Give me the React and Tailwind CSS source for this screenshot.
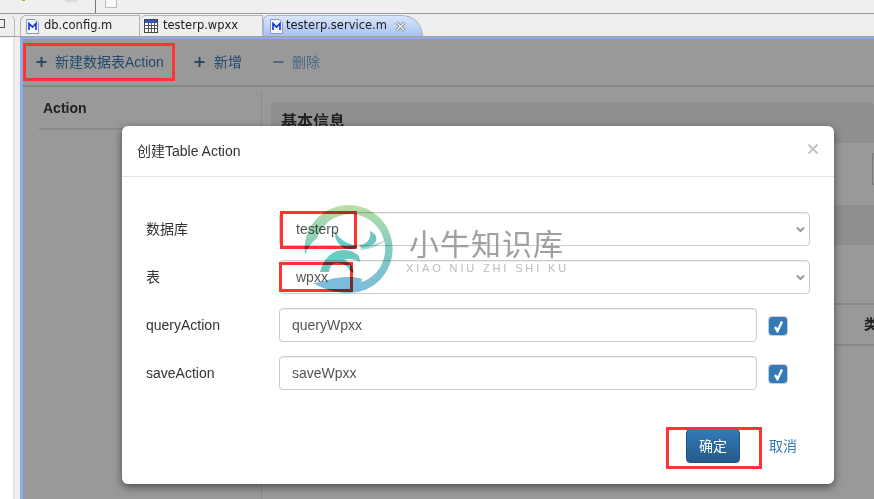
function MIcon() {
  return (
    <svg width="13" height="15" viewBox="0 0 13 15" className="shrink-0">
      <path d="M0.5 0.5H9L12.5 4V14.5H0.5Z" fill="#f4f6fb" stroke="#8a9ab5" />
      <path d="M3 11V4.5L6.5 8L10 4.5V11" fill="none" stroke="#1030e0" strokeWidth="1.6" />
    </svg>
  );
}
function GridIcon() {
  return (
    <svg width="14" height="14" viewBox="0 0 14 14" className="shrink-0">
      <rect x="0.5" y="0.5" width="13" height="13" fill="#fff" stroke="#444" />
      <rect x="1" y="1" width="12" height="3" fill="#3a4fc0" />
      <path d="M0 6.5H14M0 9.5H14M4.5 4V14M7.5 4V14M10.5 4V14" stroke="#555" />
    </svg>
  );
}
function Plus({ dim }) {
  return (
    <svg width="11" height="12" viewBox="0 0 11 12" className="shrink-0">
      {!dim && <path d="M5.5 1V11" stroke="#254a6b" strokeWidth="2" />}
      <path d="M0.5 6H10.5" stroke={dim ? "#4a6a86" : "#254a6b"} strokeWidth="2" />
    </svg>
  );
}
function Check() {
  return (
    <div className="w-[20px] h-[20px] rounded-[4px] bg-[#337ab7] border border-[#c3d0dc] flex items-center justify-center ml-[11px] mt-[8px] shrink-0">
      <svg width="13" height="13" viewBox="0 0 13 13">
        <path d="M3 7L5.5 11L10 1.5" fill="none" stroke="#fff" strokeWidth="2.4" />
      </svg>
    </div>
  );
}
function Select({ value }) {
  return (
    <div className="relative w-[531px] h-[34px]">
      <select defaultValue={value} className={`${field} w-full appearance-none pl-[16px]`}>
        <option>{value}</option>
      </select>
      <svg className="absolute left-[517px] top-[14px] pointer-events-none" width="9" height="7" viewBox="0 0 9 7">
        <path d="M1 1.5L4.5 5L8 1.5" fill="none" stroke="#999" strokeWidth="2" />
      </svg>
    </div>
  );
}
const rowLabel = "w-[133px] text-[14px] text-[#333] leading-[34px]";
const field = "h-[34px] border border-[#ccc] rounded-[4px] bg-white text-[14px] text-[#555] px-3 shadow-[inset_0_1px_1px_rgba(0,0,0,0.075)]";
const font = "font-['Liberation_Sans','Noto_Sans_CJK_SC',sans-serif]";

export default function App() {
  return (
    <div className={`relative w-[874px] h-[499px] overflow-hidden bg-[#efefef] flex flex-col ${font}`}>
      {/* top toolbar strip */}
      <div className="h-[14px] border-b border-[#9a9a92] bg-[#efefef] flex items-start shrink-0">
        <div className="ml-[22px] w-[3px] h-[1px] bg-[#c99a3a]" />
        <div className="ml-[40px] w-[12px] h-[2px] bg-[#dcdcdc]" />
        <div className="ml-[18px] w-px h-[13px] bg-[#777]" />
        <div className="ml-[9px] w-[12px] h-[8px] border border-[#bbb] border-t-0 bg-[#f8f8f8]" />
      </div>
      <div className="flex-1 flex min-h-0">
        {/* left view */}
        <div className="w-[20px] shrink-0 flex flex-col">
          <div className="h-[22px] flex items-start shrink-0">
            <div className="w-[15px] h-full border-r border-[#bbb] rounded-tr-[6px] mt-[1px] pt-[4px]">
              <div className="w-[5px] h-[9px] border border-l-0 border-[#555]" />
            </div>
          </div>
          <div className="h-px bg-[#a0a0a0] shrink-0" />
          <div className="h-px shrink-0" />
          <div className="flex-1 flex">
            <div className="w-[13px] bg-white" />
            <div className="w-[2px] bg-[#e8e5d8]" />
          </div>
        </div>
        {/* editor */}
        <div className="flex-1 flex flex-col min-w-0">
          <div className="h-[22px] flex items-stretch shrink-0 text-[11.5px] text-[#1a1a1a] font-['DejaVu_Sans',sans-serif]">
            <div className="w-[120px] border-l border-r border-t border-[#b5b5b5] rounded-tl-[6px] flex items-center gap-[5px] pl-[5px] mt-[1px]">
              <MIcon /><span>db.config.m</span>
            </div>
            <div className="w-[123px] border-r border-t border-[#b5b5b5] rounded-tl-[6px] flex items-center gap-[5px] pl-[4px] mt-[1px]">
              <GridIcon /><span>testerp.wpxx</span>
            </div>
            <div className="w-[160px] rounded-tl-[6px] rounded-tr-[24px] border-t border-r border-l border-[#a8b4cc] bg-gradient-to-b from-[#dbe6fb] to-[#a9c1f2] flex items-center gap-[3px] pl-[6px] mt-[1px]">
              <MIcon /><span>testerp.service.m</span>
              <svg width="11" height="11" viewBox="0 0 11 11" className="ml-[5px]">
                <path d="M1.5 1.5L9.5 9.5M9.5 1.5L1.5 9.5" stroke="#6e7a8a" strokeWidth="3" />
                <path d="M1.5 1.5L9.5 9.5M9.5 1.5L1.5 9.5" stroke="#fff" strokeWidth="1.2" />
              </svg>
            </div>
          </div>
          <div className="h-px bg-[#a0a0a0] shrink-0" />
          <div className="h-[2px] bg-[#8fabea] shrink-0" />
          <div className="flex-1 flex flex-col min-h-0 border-l-[3px] border-[#8fabea] bg-[#999]">
            <div className="h-[48px] border-b-2 border-[#888] flex items-center text-[14px] text-[#254a6b] pl-[13px] shrink-0">
              <Plus /><span className="ml-2">新建数据表Action</span>
              <span className="ml-[30px]"><Plus /></span><span className="ml-[9px]">新增</span>
              <span className="ml-[31px]"><Plus dim /></span><span className="ml-2 text-[#4a6a86]">删除</span>
            </div>
            <div className="flex-1 flex pt-[6px] min-h-0">
              <div className="w-[239px] border-r border-[#888] pl-[16px] pr-[8px] shrink-0">
                <div className="h-[37px] border-b-2 border-[#8a8a8a] pl-[4px] text-[14px] font-bold text-[#222] leading-[30px] w-[215px]">Action</div>
              </div>
              <div className="flex-1 ml-[9px] flex flex-col min-w-0">
                <div className="h-[41px] mt-[9px] bg-[#8f8f8f] rounded-t-[4px] pl-[10px] text-[16px] font-bold text-[#222] leading-[40px]">基本信息</div>
                <div className="h-[62px] flex justify-end pt-[10px]">
                  <div className="w-[2px] h-[32px] border border-r-0 border-[#777] rounded-l-[3px]" />
                </div>
                <div className="h-[40px] bg-[#8f8f8f]" />
                <div className="h-[58px]" />
                <div className="h-[43px] border-y-2 border-[#888] flex justify-end items-center font-bold text-[14px] text-[#222] overflow-hidden">
                  <span className="w-[10px] overflow-hidden whitespace-nowrap">类型</span>
                </div>
              </div>
            </div>
          </div>
        </div>
      </div>

      {/* modal */}
      <div className="absolute left-[122px] top-[126px] w-[712px] h-[358px] bg-white rounded-[6px] shadow-[0_3px_9px_rgba(0,0,0,0.5)] flex flex-col">
        <div className="h-[51px] border-b border-[#e5e5e5] flex items-center justify-between px-[15px] shrink-0">
          <span className="text-[14px] text-[#333]">创建Table Action</span>
          <svg width="10" height="10" viewBox="0 0 10 10" className="mr-[1px] mb-[4px]">
            <path d="M0.5 0.5L9.5 9.5M9.5 0.5L0.5 9.5" stroke="#c4c4c4" strokeWidth="2" />
          </svg>
        </div>
        <div className="pl-[24px] pt-[35px] flex flex-col gap-[14px]">
          <div className="flex">
            <span className={rowLabel}>数据库</span>
            <Select value="testerp" />
          </div>
          <div className="flex">
            <span className={rowLabel}>表</span>
            <Select value="wpxx" />
          </div>
          <div className="flex">
            <span className={rowLabel}>queryAction</span>
            <input readOnly value="queryWpxx" className={`${field} w-[478px]`} />
            <Check />
          </div>
          <div className="flex">
            <span className={rowLabel}>saveAction</span>
            <input readOnly value="saveWpxx" className={`${field} w-[478px]`} />
            <Check />
          </div>
        </div>
        <div className="flex items-center justify-end mt-[39px] pr-[37px] gap-[29px]">
          <button className="w-[54px] h-[34px] rounded-[4px] text-[14px] text-white bg-gradient-to-b from-[#337ab7] to-[#265a88] border border-[#245580]">确定</button>
          <span className="text-[14px] text-[#337ab7]">取消</span>
        </div>
      </div>

      {/* annotations */}
      <div className="absolute left-[23px] top-[43px] w-[152px] h-[38px] border-[3px] border-[#ff3333]" />
      <div className="absolute left-[280px] top-[211px] w-[77px] h-[38px] border-[3px] border-[#ff3333]" />
      <div className="absolute left-[279px] top-[262px] w-[74px] h-[30px] border-[3px] border-[#ff3333]" />
      <div className="absolute left-[666px] top-[427px] w-[96px] h-[42px] border-[3px] border-[#ff3333]" />

      {/* watermark */}
      <svg className="absolute left-[300px] top-[200px] mix-blend-multiply" width="100" height="100" viewBox="0 0 100 100">
        <defs>
          <linearGradient id="wm" gradientUnits="userSpaceOnUse" x1="0" y1="5" x2="0" y2="93">
            <stop offset="0" stopColor="#bcdfa4" />
            <stop offset="0.5" stopColor="#80ccc0" />
            <stop offset="1" stopColor="#7cbcdc" />
          </linearGradient>
        </defs>
        <path d="M5 55A44 44 0 1 1 48 93L48 84A35 35 0 1 0 17 38Q9 44 5 55Z" fill="url(#wm)" />
        <g fill="#70c6c0">
          <path d="M35 30C37 38 46 44 58 46C55 50 49 50 44 48C38 45 34 38 35 30Z" />
          <path d="M70 31C76 33 78 39 75 43C71 46 66 48 61 48L59 45C64 45 72 41 70 31Z" />
          <path d="M62 47C68 46 78 44 85 40L85 41C78 46 68 50 60 50Z" opacity="0.6" />
          <path d="M20 72C24 58 32 50 44 50C50 50 55 52 59 56L60 62C56 59 48 58 44 60C50 62 53 66 54 73L50 71C47 65 42 63 37 63C33 63 30 66 29 72Z" />
        </g>
        <path d="M13 83C22 83 28 79 36 78C44 77 54 76 62 79L60 91L48 93C38 93 25 90 13 83Z" fill="#7cbcdc" />
      </svg>
      <div className="absolute left-[409px] top-[224px] text-[30px] leading-[36px] tracking-[1px] text-[#a0a0a0] font-['Noto_Sans_CJK_SC',sans-serif] whitespace-nowrap">小牛知识库</div>
      <div className="absolute left-[406px] top-[262px] text-[11px] leading-[13px] tracking-[2.85px] text-[#bbb] whitespace-nowrap">XIAO NIU ZHI SHI KU</div>
    </div>
  );
}
